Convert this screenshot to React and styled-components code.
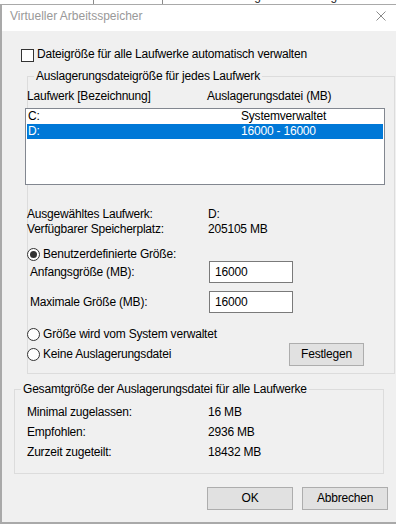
import React from "react";
import styled, { createGlobalStyle } from "styled-components";

const Global = createGlobalStyle`
  html, body { margin: 0; padding: 0; background: #fff; }
  body {
    font-family: "Liberation Sans", Arial, sans-serif;
    font-size: 12px;
    line-height: 15px;
    letter-spacing: -0.2px;
    color: #000;
  }
  * { box-sizing: border-box; }
`;

const Page = styled.div`
  width: 396px;
  height: 524px;
  overflow: hidden;
  display: flex;
  flex-direction: column;
  background: #fff;
`;

const BackStrip = styled.div`
  height: 4px;
  overflow: hidden;
  display: flex;
  align-items: flex-end;
  background: #fff;
  color: #222;
  font-size: 12px;
  line-height: 12px;
  letter-spacing: 0;
  white-space: nowrap;
`;

const BackTab = styled.span`
  padding: 0 ${(p) => p.$pad || 6}px;
  margin-left: ${(p) => p.$shift || 0}px;
  border-right: ${(p) => (p.$last ? "none" : "1px solid #8a8a8a")};
  height: 14px;
  flex: none;
`;

const Dialog = styled.div`
  flex: 1;
  display: flex;
  flex-direction: column;
  border-top: 1px solid #a9a9a9;
  border-left: 2px solid #a9a9a9;
  border-bottom: 2px solid #a9a9a9;
  background: #f0f0f0;
`;

const TitleBar = styled.div`
  height: 26px;
  flex: none;
  display: flex;
  align-items: flex-start;
  background: #fff;
  padding: 4px 0 0 8px;
  color: #999;
`;

const Title = styled.span`
  font-size: 12px;
  letter-spacing: 0;
`;

const Close = styled.svg`
  margin: 2px 10px 0 auto;
  width: 10px;
  height: 10px;
  flex: none;
`;

const Client = styled.div`
  flex: 1;
  display: flex;
  flex-direction: column;
`;

const CheckRow = styled.label`
  display: flex;
  align-items: flex-start;
  gap: 3px;
  margin: 16px 0 0 19px;
  height: 15px;
`;

const CheckBox = styled.span`
  width: 13px;
  height: 13px;
  margin-top: 2px;
  border: 1px solid #333;
  background: #fff;
  flex: none;
`;

const Group = styled.fieldset`
  margin: ${(p) => p.$top}px 0 0 ${(p) => p.$left}px;
  width: ${(p) => p.$width}px;
  border: 1px solid #dcdcdc;
  padding: 0 0 ${(p) => p.$bottom}px 0;
  min-width: 0;
`;

const Legend = styled.legend`
  margin-left: 6px;
  padding: 0 2px;
  line-height: 15px;
`;

const Headers = styled.div`
  display: grid;
  grid-template-columns: 180px 1fr;
  margin: 5px 0 0 -1px;
`;

const ListBox = styled.div`
  margin: 4px 0 0 -3px;
  width: 360px;
  height: 77px;
  border: 1px solid #828790;
  background: #fff;
  padding: 0 1px;
`;

const ListRow = styled.div`
  display: grid;
  grid-template-columns: 213px 1fr;
  height: 15px;
  padding-left: 1px;
  background: ${(p) => (p.$selected ? "#0078d7" : "transparent")};
  color: ${(p) => (p.$selected ? "#fff" : "#000")};
`;

const InfoGrid = styled.div`
  display: grid;
  grid-template-columns: 181px 1fr;
  margin: ${(p) => p.$top}px 0 0 ${(p) => p.$left}px;
  row-gap: ${(p) => p.$gap || 0}px;
`;

const RadioRow = styled.div`
  display: flex;
  align-items: center;
  gap: 3px;
  height: ${(p) => p.$h || 14}px;
  margin: ${(p) => p.$top}px 0 0 -1px;
`;

const RadioCircle = styled.span`
  width: 13px;
  height: 13px;
  border-radius: 50%;
  border: 1px solid #333;
  background: #fff;
  display: flex;
  align-items: center;
  justify-content: center;
  flex: none;
  &::after {
    content: "";
    width: 7px;
    height: 7px;
    border-radius: 50%;
    background: ${(p) => (p.$checked ? "#333" : "transparent")};
  }
`;

const FieldRow = styled.div`
  display: grid;
  grid-template-columns: 181px 84px;
  align-items: center;
  margin-top: ${(p) => p.$top}px;
`;

const FieldLabel = styled.span`
  padding-left: 2px;
`;

const Input = styled.div`
  height: 22px;
  border: 1px solid #7a7a7a;
  background: #fff;
  padding: 3px 0 0 5px;
`;

const LastRow = styled.div`
  display: flex;
  align-items: center;
  justify-content: space-between;
  height: 23px;
  margin: 2px 30px 0 -1px;
`;

const RadioLabel = styled.div`
  display: flex;
  align-items: center;
  gap: 3px;
`;

const Button = styled.div`
  width: ${(p) => p.$w}px;
  height: 23px;
  border: 1px solid #adadad;
  background: #e1e1e1;
  display: flex;
  align-items: center;
  justify-content: center;
  flex: none;
`;

const Footer = styled.div`
  display: flex;
  justify-content: flex-end;
  gap: 9px;
  margin: 13px 8px 0 0;
`;

function Radio({ checked, children, top, h }) {
  return (
    <RadioRow $top={top} $h={h}>
      <RadioCircle $checked={checked} />
      <span>{children}</span>
    </RadioRow>
  );
}

export default function App() {
  return (
    <>
      <Global />
      <Page>
        <BackStrip>
          <BackTab $pad={0} $shift={-18}>Visuelle Effekte&nbsp;&nbsp;&nbsp;&nbsp;&nbsp;</BackTab>
          <BackTab $pad={7}>Erweitert&nbsp;&nbsp;</BackTab>
          <BackTab $pad={6} $last>Datenausführungsverhinderung</BackTab>
        </BackStrip>
        <Dialog>
          <TitleBar>
            <Title>Virtueller Arbeitsspeicher</Title>
            <Close viewBox="0 0 10 10">
              <path d="M0.5 0.5 L9.5 9.5 M9.5 0.5 L0.5 9.5" stroke="#8a8a8a" strokeWidth="1" fill="none" />
            </Close>
          </TitleBar>
          <Client>
            <CheckRow>
              <CheckBox />
              <span>Dateigröße für alle Laufwerke automatisch verwalten</span>
            </CheckRow>

            <Group $top={7} $left={25} $width={368} $bottom={7}>
              <Legend>Auslagerungsdateigröße für jedes Laufwerk</Legend>
              <Headers>
                <span>Laufwerk [Bezeichnung]</span>
                <span>Auslagerungsdatei (MB)</span>
              </Headers>
              <ListBox>
                <ListRow>
                  <span>C:</span>
                  <span>Systemverwaltet</span>
                </ListRow>
                <ListRow $selected>
                  <span>D:</span>
                  <span>16000 - 16000</span>
                </ListRow>
              </ListBox>
              <InfoGrid $top={22} $left={-1}>
                <span>Ausgewähltes Laufwerk:</span>
                <span>D:</span>
                <span>Verfügbarer Speicherplatz:</span>
                <span>205105 MB</span>
              </InfoGrid>
              <Radio checked top={10}>Benutzerdefinierte Größe:</Radio>
              <FieldRow $top={0}>
                <FieldLabel>Anfangsgröße (MB):</FieldLabel>
                <Input>16000</Input>
              </FieldRow>
              <FieldRow $top={8}>
                <FieldLabel>Maximale Größe (MB):</FieldLabel>
                <Input>16000</Input>
              </FieldRow>
              <Radio top={14}>Größe wird vom System verwaltet</Radio>
              <LastRow>
                <RadioLabel>
                  <RadioCircle />
                  <span>Keine Auslagerungsdatei</span>
                </RadioLabel>
                <Button $w={75}>Festlegen</Button>
              </LastRow>
            </Group>

            <Group $top={8} $left={12} $width={370} $bottom={13}>
              <Legend>Gesamtgröße der Auslagerungsdatei für alle Laufwerke</Legend>
              <InfoGrid $top={8} $left={12} $gap={5}>
                <span>Minimal zugelassen:</span>
                <span>16 MB</span>
                <span>Empfohlen:</span>
                <span>2936 MB</span>
                <span>Zurzeit zugeteilt:</span>
                <span>18432 MB</span>
              </InfoGrid>
            </Group>

            <Footer>
              <Button $w={86}>OK</Button>
              <Button $w={86}>Abbrechen</Button>
            </Footer>
          </Client>
        </Dialog>
      </Page>
    </>
  );
}
